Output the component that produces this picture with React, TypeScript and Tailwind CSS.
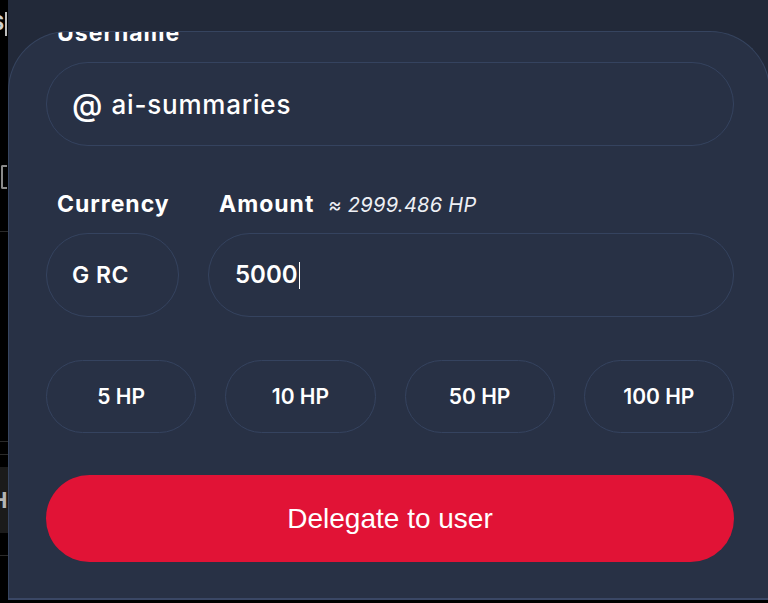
import React from 'react';

const poppins = { fontFamily: 'Inter, "Noto Sans", sans-serif' };

const presets = ['5 HP', '10 HP', '50 HP', '100 HP'];

function BackdropStrip() {
  // bits of the page behind the modal that peek out on the left
  return (
    <div className="w-2 shrink-0 h-full bg-black overflow-hidden flex flex-col" style={poppins}>
      <div className="h-[12px]" />
      <div className="flex items-start h-[24px]">
        <span className="text-[20px] leading-[22px] font-bold text-[#d0d0d0] -ml-[9px]">S</span>
        <span className="w-[2px] h-[24px] bg-[#bdbdbd] ml-[1px]" />
      </div>
      <div className="h-[129px]" />
      <div className="w-[6px] h-[24px] border-2 border-r-0 border-[#8a8a8a] rounded-l-[2px] ml-[1px]" />
      <div className="h-[42px]" />
      <div className="h-px bg-[#2a2a2a]" />
      <div className="h-[209px]" />
      <div className="h-px bg-[#2a2a2a]" />
      <div className="h-[12px]" />
      <div className="h-px bg-[#2a2a2a]" />
      <div className="h-[12px]" />
      <div className="h-[66px] bg-[#1b1b1b] flex items-center">
        <span className="text-[22px] font-bold text-[#b5b5b5] -ml-[9px]">H</span>
      </div>
      <div className="h-[22px]" />
      <div className="h-px bg-[#2a2a2a]" />
    </div>
  );
}

export default function App() {
  return (
    <div className="w-[768px] h-[603px] bg-black flex overflow-hidden">
      <BackdropStrip />
      <div className="flex-1 h-[600px] bg-[#222939] border-b-2 border-[#3a4765] pt-[31px] flex flex-col overflow-hidden">
        <div
          className="flex-1 w-[762px] rounded-t-[60px] border border-b-0 border-[#36445f] bg-[#283145] overflow-hidden pl-[37px] pr-[35px]"
          style={poppins}
        >
          <div className="-mt-[13px] text-white">
            <div className="pl-[11px] text-[23px] leading-[28px] font-bold tracking-[1px]">Username</div>

            <div className="mt-[15px] h-[84px] rounded-full border border-[#35435f] flex items-center pl-[25px] gap-[9px]">
              <span className="text-[31px] leading-none font-medium">@</span>
              <span className="text-[26px] font-medium tracking-[0.8px]">ai-summaries</span>
            </div>

            <div className="mt-[44px] flex h-[28px] items-baseline">
              <div className="w-[162px] pl-[11px] text-[23px] leading-[28px] font-bold tracking-[1px]">Currency</div>
              <div className="pl-[11px] text-[23px] leading-[28px] font-bold tracking-[1px]">Amount</div>
              <div className="ml-[14px] text-[20px] italic tracking-[0.3px] text-[#eef0f5]">≈ 2999.486 HP</div>
            </div>

            <div className="mt-[15px] flex gap-[29px]">
              <div className="w-[133px] h-[84px] shrink-0 rounded-full border border-[#35435f] flex items-center pl-[25px] text-[23px] font-semibold tracking-[0.5px]">
                G RC
              </div>
              <div className="flex-1 h-[84px] rounded-full border border-[#35435f] flex items-center pl-[26px] text-[24px] font-semibold">
                <span>5000</span>
                <span className="w-[1.5px] h-[27px] bg-white ml-[1px]" />
              </div>
            </div>

            <div className="mt-[43px] grid grid-cols-4 gap-[29px]">
              {presets.map((p) => (
                <button
                  key={p}
                  className="h-[73px] rounded-full border border-[#35435f] flex items-center justify-center text-[21px] font-semibold text-white"
                >
                  {p}
                </button>
              ))}
            </div>

            <button
              className="mt-[42px] w-full h-[87px] rounded-full bg-[#e11336] text-white text-[28px] flex items-center justify-center"
              style={{ fontFamily: '"Liberation Sans", Arial, sans-serif' }}
            >
              Delegate to user
            </button>
          </div>
        </div>
      </div>
    </div>
  );
}
